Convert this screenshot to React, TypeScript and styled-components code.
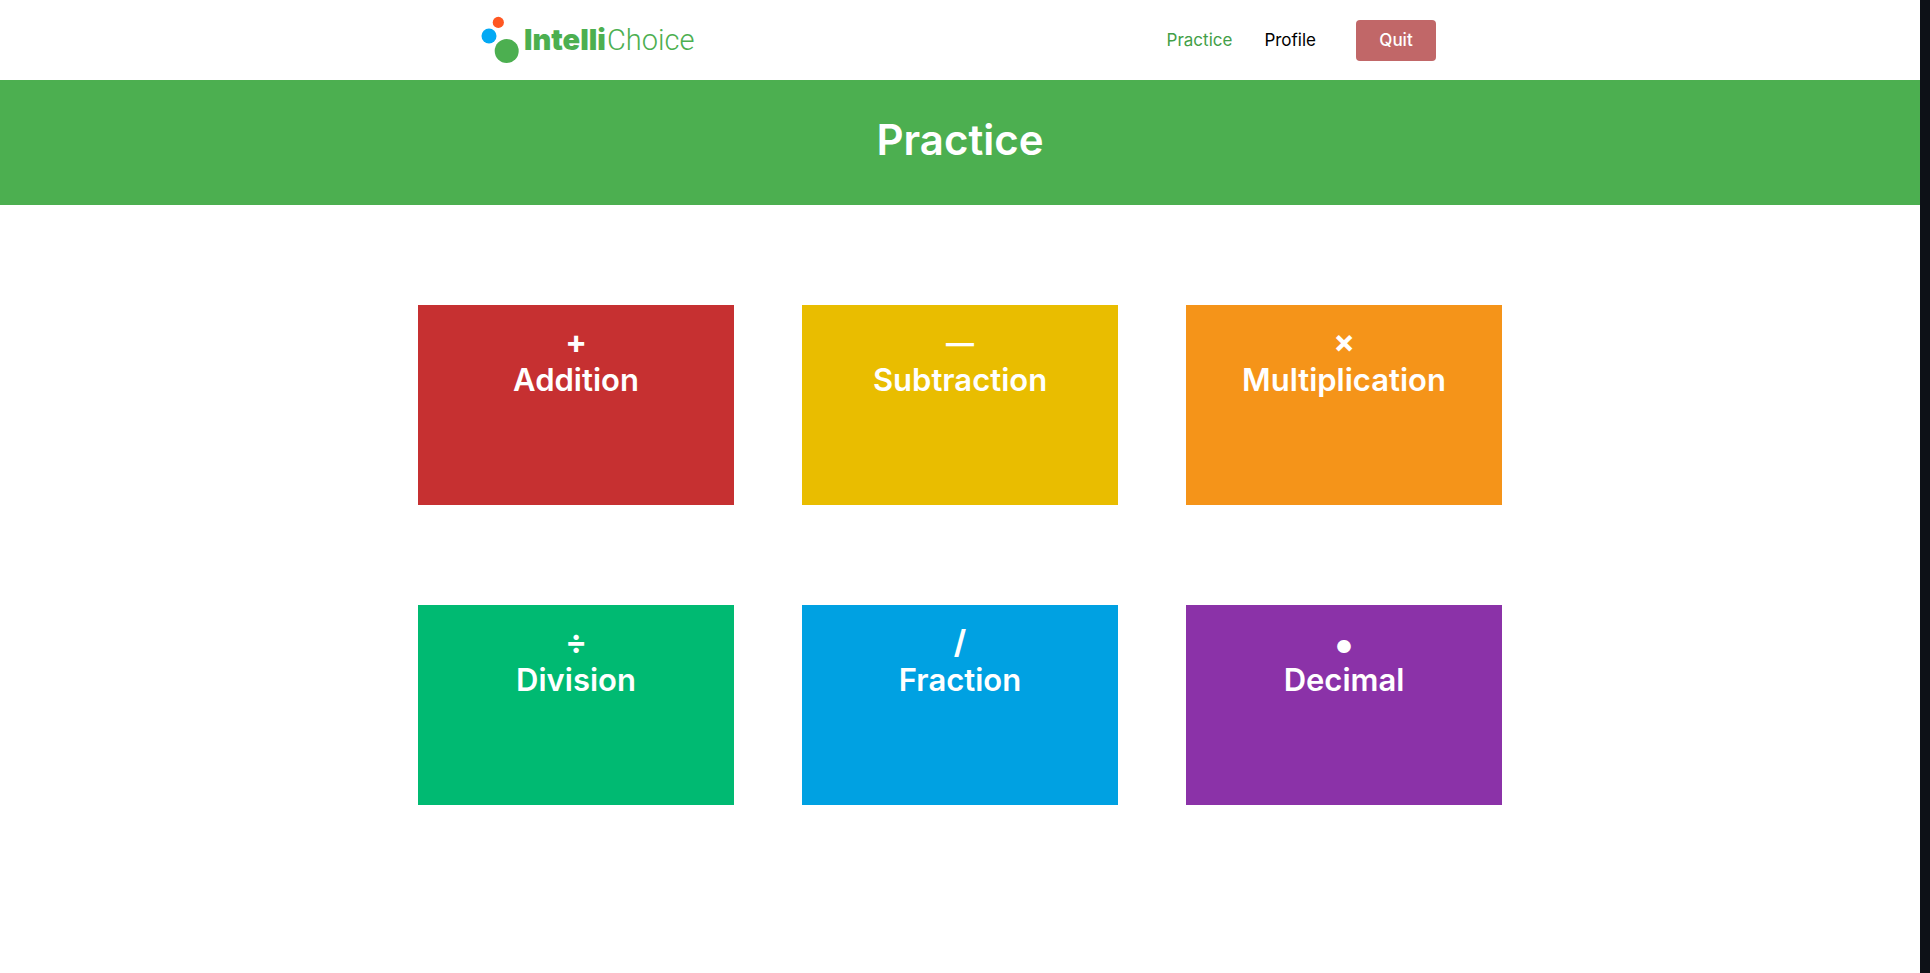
import React from "react";
import styled, { createGlobalStyle } from "styled-components";

const GlobalStyle = createGlobalStyle`
  * {
    box-sizing: border-box;
  }
  body {
    margin: 0;
    background: #ffffff;
    font-family: Inter, "Liberation Sans", sans-serif;
  }
`;

const Page = styled.div`
  min-height: 100vh;
  border-right: 10px solid #0d1117;
`;

const Header = styled.header`
  display: flex;
  align-items: center;
  justify-content: space-between;
  width: 50%;
  min-width: 640px;
  height: 80px;
  margin: 0 auto;
  padding-right: 4px;
`;

const Brand = styled.a`
  display: flex;
  align-items: center;
  gap: 4px;
  color: #4caf50;
  text-decoration: none;
`;

const BrandMark = styled.svg`
  width: 40px;
  height: 56px;
`;

const BrandName = styled.span`
  display: flex;
  align-items: baseline;
  font-size: 29px;
  line-height: 40px;
`;

const BrandStrong = styled.strong`
  font-weight: 900;
`;

const BrandLight = styled.span`
  margin-left: 1px;
  font-family: Roboto, "Liberation Sans", sans-serif;
  font-weight: 300;
`;

const Nav = styled.nav`
  display: flex;
  align-items: center;
  font-size: 17px;
  line-height: 24px;
`;

const NavLink = styled.a<{ $active?: boolean }>`
  margin-right: 32px;
  color: ${(p) => (p.$active ? "#43a047" : "#000000")};
  text-decoration: none;
`;

const QuitButton = styled.button`
  width: 80px;
  height: 41px;
  margin-left: 8px;
  padding: 0;
  border: 0;
  border-radius: 4px;
  background: #c16768;
  color: #ffffff;
  font: 500 17px/24px Inter, "Liberation Sans", sans-serif;
  cursor: pointer;
`;

const Banner = styled.section`
  display: flex;
  justify-content: center;
  height: 125px;
  padding-top: 34px;
  background: #4caf50;
`;

const Title = styled.h1`
  margin: 0;
  color: #ffffff;
  font-size: 42px;
  font-weight: 600;
  line-height: 52px;
`;

const Topics = styled.main`
  display: grid;
  grid-template-columns: repeat(3, 1fr);
  gap: 100px 68px;
  width: 60%;
  margin: 0 auto;
  padding: 100px 34px;
`;

const Topic = styled.a<{ $color: string }>`
  height: 200px;
  padding-top: 18px;
  background: ${(p) => p.$color};
  color: #ffffff;
  font-weight: 600;
  line-height: 38px;
  text-align: center;
  text-decoration: none;
`;

const SymbolLine = styled.div`
  height: 38px;
  font-size: 32px;
  font-weight: 700;
`;

const Symbol = styled.span<{ $size: number }>`
  font-size: ${(p) => p.$size}px;
  line-height: 1;
`;

const TopicName = styled.h2`
  margin: 0;
  font-size: 31px;
  font-weight: 600;
`;

const topics = [
  { name: "Addition", symbol: "+", size: 32, color: "#c63031" },
  { name: "Subtraction", symbol: "—", size: 28, color: "#e9bd00" },
  { name: "Multiplication", symbol: "×", size: 32, color: "#f59419" },
  { name: "Division", symbol: "÷", size: 32, color: "#00ba72" },
  { name: "Fraction", symbol: "/", size: 32, color: "#00a1e2" },
  { name: "Decimal", symbol: "●", size: 18, color: "#8b32a8" },
];

export default function App() {
  return (
    <Page>
      <GlobalStyle />
      <Header>
        <Brand href="#" aria-label="IntelliChoice">
          <BrandMark viewBox="0 0 40 56" aria-hidden="true">
            <circle cx="18.3" cy="10.4" r="5.6" fill="#ff5722" />
            <circle cx="9" cy="24" r="7.5" fill="#03a9f4" />
            <circle cx="26.7" cy="39" r="12" fill="#4caf50" />
          </BrandMark>
          <BrandName>
            <BrandStrong>Intelli</BrandStrong>
            <BrandLight>Choice</BrandLight>
          </BrandName>
        </Brand>
        <Nav>
          <NavLink href="#practice" $active>
            Practice
          </NavLink>
          <NavLink href="#profile">Profile</NavLink>
          <QuitButton type="button">Quit</QuitButton>
        </Nav>
      </Header>
      <Banner>
        <Title>Practice</Title>
      </Banner>
      <Topics>
        {topics.map((t) => (
          <Topic key={t.name} href={`#${t.name.toLowerCase()}`} $color={t.color}>
            <SymbolLine>
              <Symbol $size={t.size}>{t.symbol}</Symbol>
            </SymbolLine>
            <TopicName>{t.name}</TopicName>
          </Topic>
        ))}
      </Topics>
    </Page>
  );
}
